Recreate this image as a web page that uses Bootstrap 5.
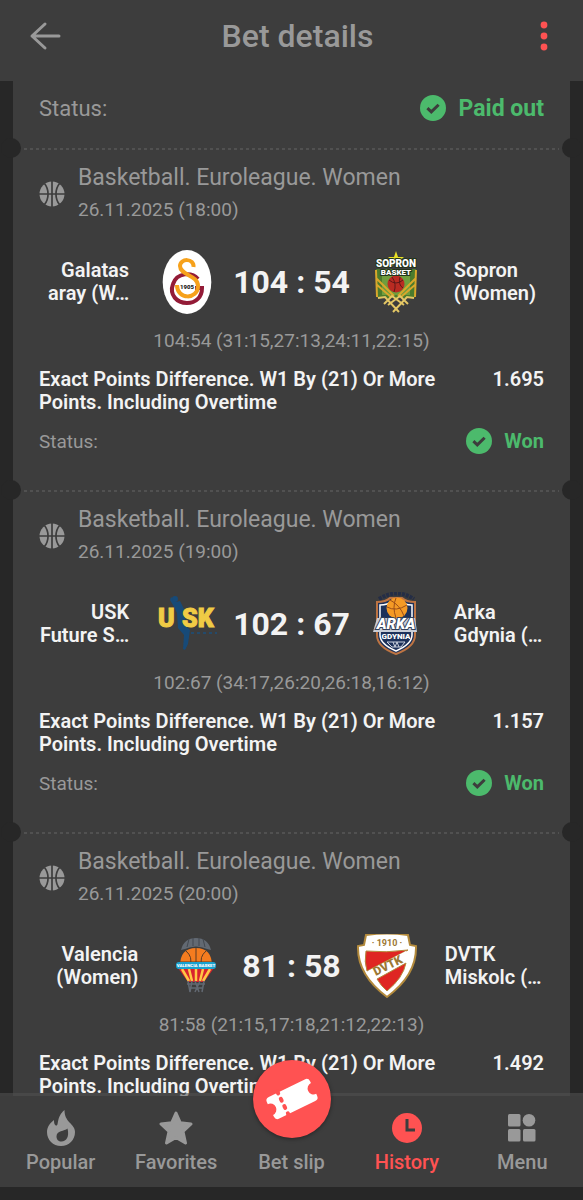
<!DOCTYPE html>
<html lang="en">
<head>
<meta charset="utf-8">
<meta name="viewport" content="width=device-width, initial-scale=1">
<title>Bet details</title>
<link href="https://cdn.jsdelivr.net/npm/bootstrap@5.3.0/dist/css/bootstrap.min.css" rel="stylesheet">
<style>
  :root { --panel:#3d3d3d; --back:#272727; --muted:#999; --ink:#f3f3f3; --win:#4cba6c; --accent:#ff5252; }
  body { background:var(--back); color:var(--ink); font-family:Roboto, "Liberation Sans", sans-serif; font-size:20px; line-height:23px; }
  svg { display:block; flex:none; }
  .topbar { background:var(--panel); color:var(--muted); height:81px; padding:0 28px 10px; }
  .topbar h1 { font-size:32px; line-height:40px; font-weight:500; }
  .tool { background:none; border:0; padding:0; color:inherit; }
  .feed { min-height:0; overflow-y:auto; scrollbar-width:none; padding:0 13px; }
  .feed::-webkit-scrollbar { display:none; }
  .slip { background:var(--panel); }
  .slip-part { position:relative; padding:0 26px; }
  .payout { height:67px; padding-bottom:13px; font-size:22px; }
  .payout .win { font-size:23px; gap:13px; }
  .tear::before, .tear::after { content:""; position:absolute; top:-10px; width:20px; height:20px; border-radius:50%; background:var(--back); }
  .tear::before { left:-12px; }
  .tear::after { right:-12px; }
  .perforation { height:2px; margin:0 -15px; background:repeating-linear-gradient(90deg, #515151 0 3px, transparent 3px 6px); }
  .game { padding-bottom:36px; }
  .muted { color:var(--muted); }
  .win { color:var(--win); font-weight:700; }
  .league { font-size:23px; line-height:32px; font-weight:400; }
  .event { padding-top:12px; line-height:32px; font-size:19px; gap:13px; }
  .match { height:64px; margin-top:24px; gap:14px; }
  .team { flex:1 1 0; min-width:0; font-weight:600; white-space:nowrap; }
  .team.home { margin-right:12px; text-align:right; }
  .team.home { direction:ltr; display:flex; flex-direction:column; align-items:flex-end; }
  .team.away { margin-left:12px; }
  .score { font-size:32px; line-height:40px; font-weight:700; }
  .periods { margin-top:15px; font-size:19px; }
  .bet { margin-top:16px; font-weight:600; }
  .result { margin-top:14px; }
  .result .muted { font-size:19px; }
  .tabs { background:var(--panel); background-clip:padding-box; border-top:3px solid rgba(80,80,80,.6); height:94px; margin-top:-3px; padding:0 3px; }
  .tabs a { flex:1 1 0; color:var(--muted); font-weight:500; text-decoration:none; position:relative; padding-top:12px; }
  .tabs a.active { color:var(--accent); }
  .tabs .glyph { height:40px; margin-bottom:3px; }
  .fab { position:absolute; top:-36px; left:50%; margin-left:-39px; width:78px; height:78px; border-radius:50%; background:var(--accent); box-shadow:0 1px 4px rgba(0,0,0,.4); }
  .system { height:13px; background:var(--back); }
</style>
</head>
<body>
<svg width="0" height="0" class="position-absolute" aria-hidden="true">
  <symbol id="check" viewBox="0 0 26 26"><circle cx="13" cy="13" r="13" fill="#4cba6c"/><path d="M7.400 13.200l3.900 3.700 7.300-7.200" fill="none" stroke="#3d3d3d" stroke-width="3"/></symbol>
  <symbol id="ball" viewBox="0 0 26 26"><circle cx="13" cy="13" r="12.500" fill="#999"/><path d="M13 0v26M0 13h26M5.300 2.200c5 6 5 15.600 0 21.600M20.700 2.200c-5 6-5 15.600 0 21.600" fill="none" stroke="#3d3d3d" stroke-width="1.700"/></symbol>
</svg>
<div class="vh-100 d-flex flex-column overflow-hidden">
  <header class="topbar d-flex align-items-center justify-content-between flex-shrink-0">
    <button class="tool" type="button" aria-label="Back">
      <svg width="34" height="30" viewBox="0 0 34 30" fill="none" stroke="currentColor" stroke-width="3" stroke-linecap="round" stroke-linejoin="round"><path d="M17 3L4 15l13 12M4 15h27"/></svg>
    </button>
    <h1 class="m-0">Bet details</h1>
    <button class="tool" type="button" aria-label="More">
      <svg width="22" height="30" viewBox="0 0 22 30" fill="#ff5252"><circle cx="11" cy="4" r="3.400"/><circle cx="11" cy="15" r="3.400"/><circle cx="11" cy="26" r="3.400"/></svg>
    </button>
  </header>

  <main class="feed flex-grow-1">
    <div class="slip">
      <div class="slip-part payout d-flex align-items-center justify-content-between">
        <span class="muted">Status:</span>
        <span class="win d-flex align-items-center"><svg width="26" height="26"><use href="#check"/></svg>Paid out</span>
      </div>

      <section class="slip-part tear game">
        <div class="perforation"></div>
        <div class="event d-flex align-items-center muted">
          <svg width="26" height="26"><use href="#ball"/></svg>
          <div><h2 class="league m-0">Basketball. Euroleague. Women</h2><div>26.11.2025 (18:00)</div></div>
        </div>
        <div class="match d-flex align-items-center">
          <div class="team home"><span>Galatas</span><span>aray (W…</span></div>
          <svg width="64" height="64" viewBox="0 0 64 64" role="img" aria-label="Galatasaray">
            <ellipse cx="32" cy="32" rx="24.300" ry="32" fill="#fff"/>
            <path d="M43 29C37 22 22 22 18 34c-4 11 4 19 14 19 9 0 15-6 15-15h-7" fill="none" stroke="#931b37" stroke-width="4"/>
            <path d="M38.500 17c1-9-13.500-9-13.500-1 0 9 18 9 18 20 0 14-21 14-21-1" fill="none" stroke="#f6a11b" stroke-width="4"/>
            <path d="M25 33h15v7H25z" fill="#fff"/>
            <text x="32" y="39" text-anchor="middle" font-size="6" font-weight="900" fill="#222">1905</text>
          </svg>
          <div class="score">104 : 54</div>
          <svg width="64" height="64" viewBox="0 0 64 64" role="img" aria-label="Sopron Basket">
            <path d="M12 19h40l-1 28-19 15-19-15z" fill="#4b7b2d"/>
            <path d="M18 24h28v21H18z" fill="#6f9e3d"/>
            <path d="M12 20l1 27M52 20l-1 27M12 28l18 18M52 28L34 46M12 34l15 13M52 34L37 47" fill="none" stroke="#d9a72b" stroke-width="2"/>
            <circle cx="32" cy="34" r="8.500" fill="#b92b22"/><path d="M25 30q7 6 14 0M28 27q5 7 2 15M36 27q-2 8 3 11" fill="none" stroke="#5d1818"/>
            <path d="M14 48h36L32 63z" fill="#3d3d3d"/>
            <path d="M14 48l7-1 14 15M50 48l-7-1-14 15M20 54l8-8 12 9M44 54l-8-8-12 9" fill="none" stroke="#e4c765" stroke-width="2"/>
            <path d="M32 1l2 6h6l-5 4 2 6-5-4-5 4 2-6-5-4h6z" fill="#e9df25"/>
            <g font-weight="900" text-anchor="middle" fill="#fff" stroke="#23351b" stroke-width="2" paint-order="stroke"><text x="32" y="17" font-size="10">SOPRON</text><text x="32" y="25" font-size="8">BASKET</text></g>
          </svg>
          <div class="team away">Sopron<br>(Women)</div>
        </div>
        <div class="periods text-center muted">104:54 (31:15,27:13,24:11,22:15)</div>
        <div class="bet d-flex justify-content-between"><div>Exact Points Difference. W1 By (21) Or More<br>Points. Including Overtime</div><div>1.695</div></div>
        <div class="result d-flex align-items-center justify-content-between"><span class="muted">Status:</span><span class="win d-flex align-items-center gap-2"><svg class="me-1" width="26" height="26"><use href="#check"/></svg>Won</span></div>
      </section>

      <section class="slip-part tear game">
        <div class="perforation"></div>
        <div class="event d-flex align-items-center muted">
          <svg width="26" height="26"><use href="#ball"/></svg>
          <div><h2 class="league m-0">Basketball. Euroleague. Women</h2><div>26.11.2025 (19:00)</div></div>
        </div>
        <div class="match d-flex align-items-center">
          <div class="team home"><span>USK</span><span>Future S…</span></div>
          <svg width="64" height="64" viewBox="0 0 64 64" role="img" aria-label="USK">
            <path d="M16 5l5 5 4-1 4 8 2 2-1 8 2 8 3 3-2 14-3 6-2-1 1-14-6-7-1-15-4-8-3-5z" fill="#174a78"/><circle cx="20" cy="7" r="3" fill="#174a78"/>
            <g font-size="25" font-weight="900" fill="#f0cb45" stroke="#f0cb45"><text x="3" y="35">U</text><text x="27" y="35">SK</text></g>
            <path d="M36 41h26" stroke="#234a6b" stroke-width="2" stroke-dasharray="3 3"/>
          </svg>
          <div class="score">102 : 67</div>
          <svg width="64" height="64" viewBox="0 0 64 64" role="img" aria-label="Arka Gdynia">
            <path d="M15 7Q33-4 50 7" fill="none" stroke="#242d46" stroke-width="4" stroke-dasharray="3 1"/>
            <path d="M13 10q9 0 13-4h12q4 4 13 4v33q0 12-19 19Q13 55 13 43z" fill="#1d315a" stroke="#bd7443" stroke-width="2"/>
            <path d="M16 13q8 0 12-4h8q4 4 12 4v30q0 9-16 16Q16 52 16 43z" fill="none" stroke="#fff" stroke-width="1.500"/>
            <circle cx="33" cy="16" r="10.500" fill="#f59a25"/><path d="M23 15q9 5 20-2M32 6q-4 9 0 20M26 8q10 5 14 16" fill="none" stroke="#9b4d18"/>
            <path d="M13 26h38l2 14H9z" fill="#c9ced8"/>
            <text x="32" y="37" text-anchor="middle" font-size="15" font-style="italic" font-weight="900" fill="#fff" stroke="#33405a" stroke-width="2" paint-order="stroke">ARKA</text>
            <text x="32" y="47" text-anchor="middle" font-size="8" font-weight="900" fill="#fff">GDYNIA</text>
            <path d="M23 50h18l-4 5h-9zM29 50l2 5 2-5 2 5" fill="none" stroke="#ccd2df"/>
          </svg>
          <div class="team away">Arka<br>Gdynia (…</div>
        </div>
        <div class="periods text-center muted">102:67 (34:17,26:20,26:18,16:12)</div>
        <div class="bet d-flex justify-content-between"><div>Exact Points Difference. W1 By (21) Or More<br>Points. Including Overtime</div><div>1.157</div></div>
        <div class="result d-flex align-items-center justify-content-between"><span class="muted">Status:</span><span class="win d-flex align-items-center gap-2"><svg class="me-1" width="26" height="26"><use href="#check"/></svg>Won</span></div>
      </section>

      <section class="slip-part tear game">
        <div class="perforation"></div>
        <div class="event d-flex align-items-center muted">
          <svg width="26" height="26"><use href="#ball"/></svg>
          <div><h2 class="league m-0">Basketball. Euroleague. Women</h2><div>26.11.2025 (20:00)</div></div>
        </div>
        <div class="match d-flex align-items-center">
          <div class="team home"><span>Valencia</span><span>(Women)</span></div>
          <svg width="64" height="64" viewBox="0 0 64 64" role="img" aria-label="Valencia Basket">
            <path d="M17 16Q20 4 32 4t15 12l-4-1q-11-5-22 0z" fill="#626972"/><path d="M23 13l2-8M29 12V4M35 12V4M41 13l-2-8" stroke="#424850"/>
            <path d="M16 32q0-18 16-18t16 18z" fill="#f57c1f"/><path d="M32 14v18M16 28h32M22 17q7 6 4 14M42 17q-7 6-4 14" fill="none" stroke="#5d3b24"/>
            <path d="M14 34h36L40 48H24z" fill="#d8232e"/><path d="M18 35l7 12M25 35l3 12M32 35v12M39 35l-3 12M46 35l-7 12" stroke="#ffc845" stroke-width="2.500"/>
            <path d="M24 47l2 11M28 47l-2 11M31 47l4 11M36 47l-5 11M40 47l-2 11M23 50h18M25 54h14" fill="none" stroke="#626972" stroke-width="1.500"/>
            <rect x="12" y="28" width="40" height="7" rx="3" fill="#1aa1cf"/><text x="32" y="33" text-anchor="middle" font-size="4.400" font-weight="900" fill="#fff">VALENCIA BASKET</text>
          </svg>
          <div class="score">81 : 58</div>
          <svg width="64" height="64" viewBox="0 0 64 64" role="img" aria-label="DVTK">
            <path d="M11 1q21-3 42 0l2 10 6 1Q62 41 32 63 2 41 3 12l6-1z" fill="#fff" stroke="#b38a3c" stroke-width="2"/>
            <path d="M11 17q20 2 42-1L12 37Q9 28 11 17zM22 45l29-16q-3 15-19 28-6-5-10-12z" fill="#df2623" stroke="#b38a3c"/>
            <path d="M13 37l38-20v11L20 44z" fill="#fff"/>
            <text x="32" y="12" text-anchor="middle" font-size="9" font-weight="700" fill="#9c7834">· 1910 ·</text>
            <text x="33" y="36" text-anchor="middle" transform="rotate(-26 32 32)" font-size="12" font-weight="900" fill="#9c7834">DVTK</text>
          </svg>
          <div class="team away">DVTK<br>Miskolc (…</div>
        </div>
        <div class="periods text-center muted">81:58 (21:15,17:18,21:12,22:13)</div>
        <div class="bet d-flex justify-content-between"><div>Exact Points Difference. W1 By (21) Or More<br>Points. Including Overtime</div><div>1.492</div></div>
      </section>
    </div>
  </main>

  <nav class="tabs d-flex text-center flex-shrink-0 position-relative" aria-label="Main">
    <a href="#popular"><span class="glyph d-flex align-items-center justify-content-center"><svg width="28" height="36" viewBox="0 0 28 36"><path fill="#999" fill-rule="evenodd" d="M17.500 0c0 6 2 9 5 12.500 3 3 5.500 5.500 5.500 9.500 0 8-6 14-14 14S0 30 0 22c0-5 3-9 7-12 0 3 .5 5.500 2.500 5.500C12 15.500 9 7 17.500 0zM20.500 18.500c-3 3-11 1.500-11 8 0 3 2 5 5 5 5 0 8-5 6-13z"/></svg></span>Popular</a>
    <a href="#favorites"><span class="glyph d-flex align-items-center justify-content-center"><svg width="34" height="34" viewBox="0 0 34 34"><path d="M17 2l4.300 9.800L32 13l-8 7.500L26.500 32 17 26.500 7.500 32 10 20.500 2 13l10.700-1.200z" fill="#999" stroke="#999" stroke-width="3" stroke-linejoin="round"/></svg></span>Favorites</a>
    <a href="#betslip"><span class="glyph d-block"></span><span class="fab d-flex align-items-center justify-content-center"><svg width="56" height="50" viewBox="-28 -25 56 50"><g transform="rotate(-26)"><path d="M-20-12h40q4 0 4 4v2a6 6 0 0 0 0 12v2q0 4-4 4h-40q-4 0-4-4v-2a6 6 0 0 0 0-12v-2q0-4 4-4z" fill="#fff"/><path d="M-10-13v2M-10-5v2M-10 3v2M-10 11v2" stroke="#ff5252" stroke-width="4" stroke-linecap="round"/></g></svg></span>Bet slip</a>
    <a href="#history" class="active" aria-current="page"><span class="glyph d-flex align-items-center justify-content-center"><svg width="30" height="30" viewBox="0 0 30 30"><circle cx="15" cy="15" r="15" fill="#ff5252"/><path d="M15 6v11h8" fill="none" stroke="#3d3d3d" stroke-width="3"/></svg></span>History</a>
    <a href="#menu"><span class="glyph d-flex align-items-center justify-content-center"><svg width="28" height="28" viewBox="0 0 28 28" fill="#999"><rect width="12.500" height="12.500" rx="1.500"/><circle cx="21" cy="6.300" r="6.300"/><rect y="15" width="12.500" height="12.500" rx="1.500"/><rect x="15" y="15" width="12.500" height="12.500" rx="1.500"/></svg></span>Menu</a>
  </nav>
  <div class="system flex-shrink-0"></div>
</div>
<script src="https://cdn.jsdelivr.net/npm/bootstrap@5.3.0/dist/js/bootstrap.bundle.min.js"></script>
</body>
</html>
